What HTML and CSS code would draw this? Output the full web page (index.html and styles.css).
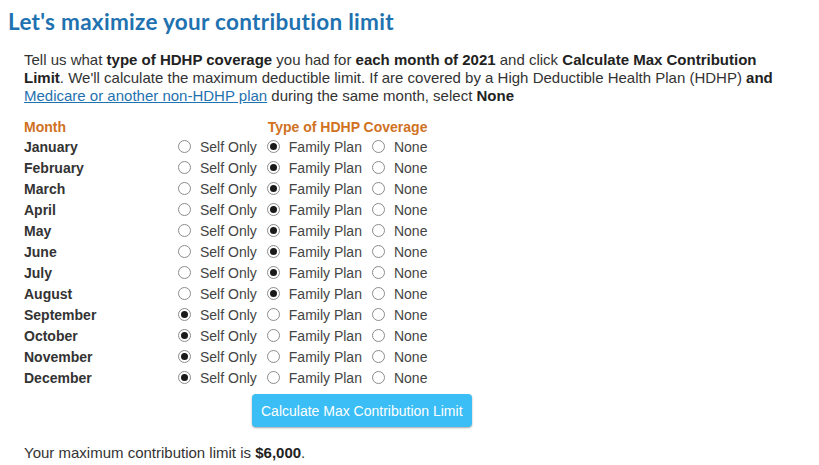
FILE: index.html
```html
<!DOCTYPE html>
<html>
<head>
<meta charset="utf-8">
<link rel="stylesheet" href="styles.css">
</head>
<body>
<h1 class="title">Let's maximize your contribution limit</h1>
<div class="content">
  <p class="intro">Tell us what <b>type of HDHP coverage</b> you had for <b>each month of 2021</b> and click <b>Calculate Max Contribution Limit</b>. We'll calculate the maximum deductible limit. If are covered by a High Deductible Health Plan (HDHP) <b>and</b> <a href="#" class="link">Medicare or another non-HDHP plan</a> during the same month, select <b>None</b></p>
  <div class="grid">
    <div class="head">Month</div>
    <div class="head head-right">Type of HDHP Coverage</div>

    <div class="month">January</div>
    <div class="opts"><label class="opt"><input type="radio" name="m1" class="radio"><span>Self Only</span></label><label class="opt"><input type="radio" name="m1" class="radio" checked><span>Family Plan</span></label><label class="opt"><input type="radio" name="m1" class="radio"><span>None</span></label></div>

    <div class="month">February</div>
    <div class="opts"><label class="opt"><input type="radio" name="m2" class="radio"><span>Self Only</span></label><label class="opt"><input type="radio" name="m2" class="radio" checked><span>Family Plan</span></label><label class="opt"><input type="radio" name="m2" class="radio"><span>None</span></label></div>

    <div class="month">March</div>
    <div class="opts"><label class="opt"><input type="radio" name="m3" class="radio"><span>Self Only</span></label><label class="opt"><input type="radio" name="m3" class="radio" checked><span>Family Plan</span></label><label class="opt"><input type="radio" name="m3" class="radio"><span>None</span></label></div>

    <div class="month">April</div>
    <div class="opts"><label class="opt"><input type="radio" name="m4" class="radio"><span>Self Only</span></label><label class="opt"><input type="radio" name="m4" class="radio" checked><span>Family Plan</span></label><label class="opt"><input type="radio" name="m4" class="radio"><span>None</span></label></div>

    <div class="month">May</div>
    <div class="opts"><label class="opt"><input type="radio" name="m5" class="radio"><span>Self Only</span></label><label class="opt"><input type="radio" name="m5" class="radio" checked><span>Family Plan</span></label><label class="opt"><input type="radio" name="m5" class="radio"><span>None</span></label></div>

    <div class="month">June</div>
    <div class="opts"><label class="opt"><input type="radio" name="m6" class="radio"><span>Self Only</span></label><label class="opt"><input type="radio" name="m6" class="radio" checked><span>Family Plan</span></label><label class="opt"><input type="radio" name="m6" class="radio"><span>None</span></label></div>

    <div class="month">July</div>
    <div class="opts"><label class="opt"><input type="radio" name="m7" class="radio"><span>Self Only</span></label><label class="opt"><input type="radio" name="m7" class="radio" checked><span>Family Plan</span></label><label class="opt"><input type="radio" name="m7" class="radio"><span>None</span></label></div>

    <div class="month">August</div>
    <div class="opts"><label class="opt"><input type="radio" name="m8" class="radio"><span>Self Only</span></label><label class="opt"><input type="radio" name="m8" class="radio" checked><span>Family Plan</span></label><label class="opt"><input type="radio" name="m8" class="radio"><span>None</span></label></div>

    <div class="month">September</div>
    <div class="opts"><label class="opt"><input type="radio" name="m9" class="radio" checked><span>Self Only</span></label><label class="opt"><input type="radio" name="m9" class="radio"><span>Family Plan</span></label><label class="opt"><input type="radio" name="m9" class="radio"><span>None</span></label></div>

    <div class="month">October</div>
    <div class="opts"><label class="opt"><input type="radio" name="m10" class="radio" checked><span>Self Only</span></label><label class="opt"><input type="radio" name="m10" class="radio"><span>Family Plan</span></label><label class="opt"><input type="radio" name="m10" class="radio"><span>None</span></label></div>

    <div class="month">November</div>
    <div class="opts"><label class="opt"><input type="radio" name="m11" class="radio" checked><span>Self Only</span></label><label class="opt"><input type="radio" name="m11" class="radio"><span>Family Plan</span></label><label class="opt"><input type="radio" name="m11" class="radio"><span>None</span></label></div>

    <div class="month">December</div>
    <div class="opts"><label class="opt"><input type="radio" name="m12" class="radio" checked><span>Self Only</span></label><label class="opt"><input type="radio" name="m12" class="radio"><span>Family Plan</span></label><label class="opt"><input type="radio" name="m12" class="radio"><span>None</span></label></div>
  </div>
  <div class="actions"><button class="btn" type="button">Calculate Max Contribution Limit</button></div>
  <p class="result">Your maximum contribution limit is <b>$6,000</b>.</p>
</div>
</body>
</html>
```
FILE: styles.css
```css
html, body {
  margin: 0;
  padding: 0;
  background: #fff;
}
body {
  padding: 0 8px;
  font-family: "Liberation Sans", Arial, sans-serif;
  font-size: 14px;
  color: #333;
}
.title {
  margin: 8px 0 0 0;
  font-family: Lato, "Open Sans", sans-serif;
  font-weight: 700;
  font-size: 22.5px;
  line-height: 27px;
  color: #1f72b0;
  letter-spacing: 0.3px;
}
.content {
  padding-left: 16px;
}
.intro {
  margin: 16px 0 0 0;
  font-size: 15px;
  line-height: 18px;
  max-width: 760px;
}
.intro b { color: #222; }
.link {
  color: #1f72b0;
  text-decoration: underline;
}
.grid {
  margin-top: 13px;
  display: grid;
  grid-template-columns: 154px max-content;
  grid-template-rows: 18px;
  grid-auto-rows: 21px;
  align-items: center;
}
.head {
  font-weight: 700;
  color: #d0721f;
}
.head-right {
  text-align: right;
}
.month {
  font-weight: 700;
  color: #333;
}
.opts {
  display: flex;
  align-items: center;
  gap: 10px;
}
.opt {
  display: flex;
  align-items: center;
  gap: 9px;
  color: #444;
}
.radio {
  appearance: none;
  -webkit-appearance: none;
  margin: 0;
  width: 13px;
  height: 13px;
  border: 1px solid #8c8c8c;
  border-radius: 50%;
  background: #fff;
  display: grid;
  place-items: center;
  box-sizing: border-box;
}
.radio:checked::after {
  content: "";
  width: 7px;
  height: 7px;
  border-radius: 50%;
  background: #1a1a1a;
}
.actions {
  margin-top: 6px;
  padding-left: 228px;
}
.btn {
  font-family: "Liberation Sans", Arial, sans-serif;
  font-size: 14px;
  color: #fff;
  background: #3bbdf5;
  border: none;
  border-radius: 4px;
  height: 33px;
  padding: 0 9px;
  box-shadow: 0 1px 2px rgba(0,0,0,0.35);
}
.result {
  margin: 17px 0 0 0;
  font-size: 15px;
  line-height: 18px;
}
.result b { color: #222; }
```
